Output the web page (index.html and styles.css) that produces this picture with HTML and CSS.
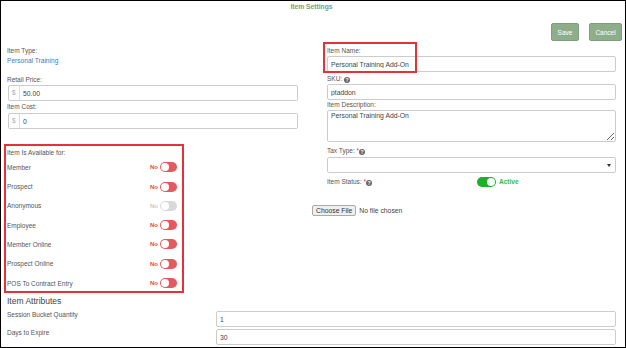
FILE: index.html
```html
<!DOCTYPE html>
<html lang="en">
  <head>
    <meta charset="UTF-8">
    <title>Item Settings</title>
    <link rel="stylesheet" href="styles.css">
  </head>
  <body>
    <div class="frame">
      <div class="title">Item Settings</div>
      <div class="actions">
        <button class="btn btn-save">Save</button>
        <button class="btn btn-cancel">Cancel</button>
      </div>

      <div class="columns">
        <div class="col-left">
          <div class="label">Item Type:</div>
          <a class="type-link">Personal Training</a>

          <div class="label price-label">Retail Price:</div>
          <div class="input-group">
            <span class="addon">$</span>
            <input class="plain" type="text" value="50.00">
          </div>
          <div class="label cost-label">Item Cost:</div>
          <div class="input-group">
            <span class="addon">$</span>
            <input class="plain" type="text" value="0">
          </div>

          <div class="avail">
            <div class="avail-title">Item Is Available for:</div>
            <div class="avail-list">
              <div class="avail-row"><span class="avail-name">Member</span><span class="state">No</span><span class="switch"></span></div>
              <div class="avail-row"><span class="avail-name">Prospect</span><span class="state">No</span><span class="switch"></span></div>
              <div class="avail-row disabled"><span class="avail-name">Anonymous</span><span class="state">No</span><span class="switch"></span></div>
              <div class="avail-row"><span class="avail-name">Employee</span><span class="state">No</span><span class="switch"></span></div>
              <div class="avail-row"><span class="avail-name">Member Online</span><span class="state">No</span><span class="switch"></span></div>
              <div class="avail-row"><span class="avail-name">Prospect Online</span><span class="state">No</span><span class="switch"></span></div>
              <div class="avail-row"><span class="avail-name">POS To Contract Entry</span><span class="state">No</span><span class="switch"></span></div>
            </div>
          </div>
        </div>

        <div class="col-right">
          <div class="group name-group">
            <div class="label">Item Name:</div>
            <input class="field" type="text" value="Personal Training Add-On">
            <div class="callout"></div>
          </div>
          <div class="group sku-group">
            <div class="label">SKU: <span class="help">?</span></div>
            <input class="field" type="text" value="ptaddon">
          </div>
          <div class="group">
            <div class="label">Item Description:</div>
            <textarea class="field area">Personal Training Add-On</textarea>
          </div>
          <div class="group tax-group">
            <div class="label">Tax Type: <span class="req">*</span><span class="help">?</span></div>
            <div class="select-wrap">
              <select class="field select"><option></option></select>
            </div>
          </div>
          <div class="group status-row">
            <div class="label status-label">Item Status: <span class="req">*</span><span class="help">?</span></div>
            <span class="switch on"></span>
            <span class="active">Active</span>
          </div>
          <div class="file-row">
            <input class="file" type="file">
          </div>
        </div>
      </div>

      <div class="attr-title">Item Attributes</div>
      <div class="attr-grid">
        <div class="attr-label">Session Bucket Quantity</div>
        <input class="field" type="text" value="1">
        <div class="attr-label">Days to Expire</div>
        <input class="field" type="text" value="30">
      </div>
    </div>
  </body>
</html>
```

FILE: styles.css
```css
* {
  box-sizing: border-box;
}

body {
  margin: 0;
  font-family: "Liberation Sans", Arial, sans-serif;
  color: #555;
  background: #fff;
}

.frame {
  width: 626px;
  height: 348px;
  border: 1px solid #000;
  padding: 0 9px 0 6px;
  overflow: hidden;
}

.title {
  text-align: center;
  font-size: 6.7px;
  font-weight: bold;
  line-height: 12px;
  color: #74a074;
}

.actions {
  display: flex;
  justify-content: flex-end;
  gap: 10px;
  margin: 10px -6px 0 0;
}

.btn {
  height: 18px;
  padding: 0;
  font-family: inherit;
  font-size: 6.5px;
  color: #fff;
  background: #8eae8b;
  border: 1px solid #7f9f7c;
  border-radius: 2px;
}

.btn-save {
  width: 28px;
}

.btn-cancel {
  width: 33px;
}

.columns {
  display: grid;
  grid-template-columns: 291px 1fr;
  column-gap: 14px;
  margin-top: 5px;
}

.label {
  font-size: 6.5px;
  line-height: 9px;
  color: #555;
  margin-bottom: 1px;
}

.type-link {
  display: block;
  font-size: 6.6px;
  line-height: 9px;
  color: #3b7cc4;
}

.price-label {
  margin-top: 10px;
}

.cost-label {
  margin-top: 1px;
  margin-bottom: 2px;
}

.input-group {
  display: flex;
  height: 16px;
  margin-left: 1px;
  border: 1px solid #ccc;
  border-radius: 2px;
}

.addon {
  width: 11px;
  padding-left: 3px;
  font-size: 6.5px;
  line-height: 14px;
  color: #aaa;
  border-right: 1px solid #ddd;
}

.plain {
  flex: 1;
  border: 0;
  padding: 0 3px;
  font-family: inherit;
  font-size: 6.8px;
  color: #444;
  outline: none;
}

.field {
  display: block;
  width: 100%;
  height: 16px;
  border: 1px solid #ccc;
  border-radius: 2px;
  padding: 0 3px;
  font-family: inherit;
  font-size: 6.8px;
  color: #444;
  background: #fff;
}

/* availability toggles */
.avail {
  width: 180px;
  margin: 15px 0 0 -3px;
  border: 2px solid #e8303a;
  padding: 2px 5px 0 1px;
}

.avail-title {
  font-size: 6.5px;
  line-height: 10px;
}

.avail-list {
  display: flex;
  flex-direction: column;
  gap: 3.3px;
  padding-top: 1.3px;
}

.avail-row {
  display: flex;
  align-items: center;
  height: 16px;
  font-size: 6.5px;
}

.avail-name {
  flex: 1;
}

.state {
  font-size: 6px;
  font-weight: bold;
  color: #e8474d;
  margin-right: 2px;
}

.switch {
  position: relative;
  display: inline-block;
  width: 17px;
  height: 10px;
  border-radius: 5px;
  background: #e55a5e;
}

.switch::before {
  content: "";
  position: absolute;
  left: 1px;
  top: 1px;
  width: 8px;
  height: 8px;
  border-radius: 50%;
  background: #fff;
}

.disabled .state {
  color: #c8c8c8;
}

.disabled .switch {
  background: #d9d9d9;
}

.switch.on {
  width: 19px;
  background: #1fae2a;
}

.switch.on::before {
  left: auto;
  right: 1px;
}

/* right column */
.group {
  padding-left: 15px;
}

.name-group {
  position: relative;
}

.callout {
  position: absolute;
  left: 11px;
  top: -4px;
  width: 94px;
  height: 31px;
  border: 2px solid #e8303a;
}

.sku-group {
  margin-top: 2px;
}

.area {
  height: 32px;
  margin-top: 1px;
  padding-top: 1px;
  resize: vertical;
}

.tax-group {
  margin-top: 4px;
}

.tax-group .label {
  margin-bottom: 2px;
}

.select-wrap {
  position: relative;
}

.select {
  appearance: none;
  -webkit-appearance: none;
}

.select-wrap::after {
  content: "";
  position: absolute;
  right: 5px;
  top: 7px;
  border-left: 2px solid transparent;
  border-right: 2px solid transparent;
  border-top: 3px solid #333;
}

.req {
  color: #e33;
}

.help {
  display: inline-block;
  width: 6px;
  height: 6px;
  border-radius: 50%;
  background: #666;
  color: #fff;
  font-size: 5px;
  font-weight: bold;
  line-height: 6px;
  text-align: center;
  vertical-align: -0.5px;
}

.status-row {
  display: flex;
  align-items: center;
  height: 11px;
  margin-top: 3px;
}

.status-label {
  width: 150px;
  margin: 0;
}

.active {
  margin-left: 3px;
  font-size: 6.5px;
  font-weight: bold;
  color: #2fbf3a;
}

.file-row {
  margin-top: 15px;
  line-height: 11px;
}

.file {
  font-family: inherit;
  font-size: 6.8px;
  color: #444;
}

.file::file-selector-button {
  height: 11px;
  margin-right: 3px;
  padding: 0 3px;
  font-family: inherit;
  font-size: 6.8px;
  color: #333;
  background: #efefef;
  border: 1px solid #aaa;
  border-radius: 2px;
}

/* attributes */
.attr-title {
  margin-top: 3px;
  font-size: 8.5px;
  line-height: 11px;
  color: #444;
}

.attr-grid {
  display: grid;
  grid-template-columns: 209px 1fr;
  row-gap: 2px;
  margin-top: 4px;
}

.attr-label {
  font-size: 6.5px;
  line-height: 8px;
}
```
